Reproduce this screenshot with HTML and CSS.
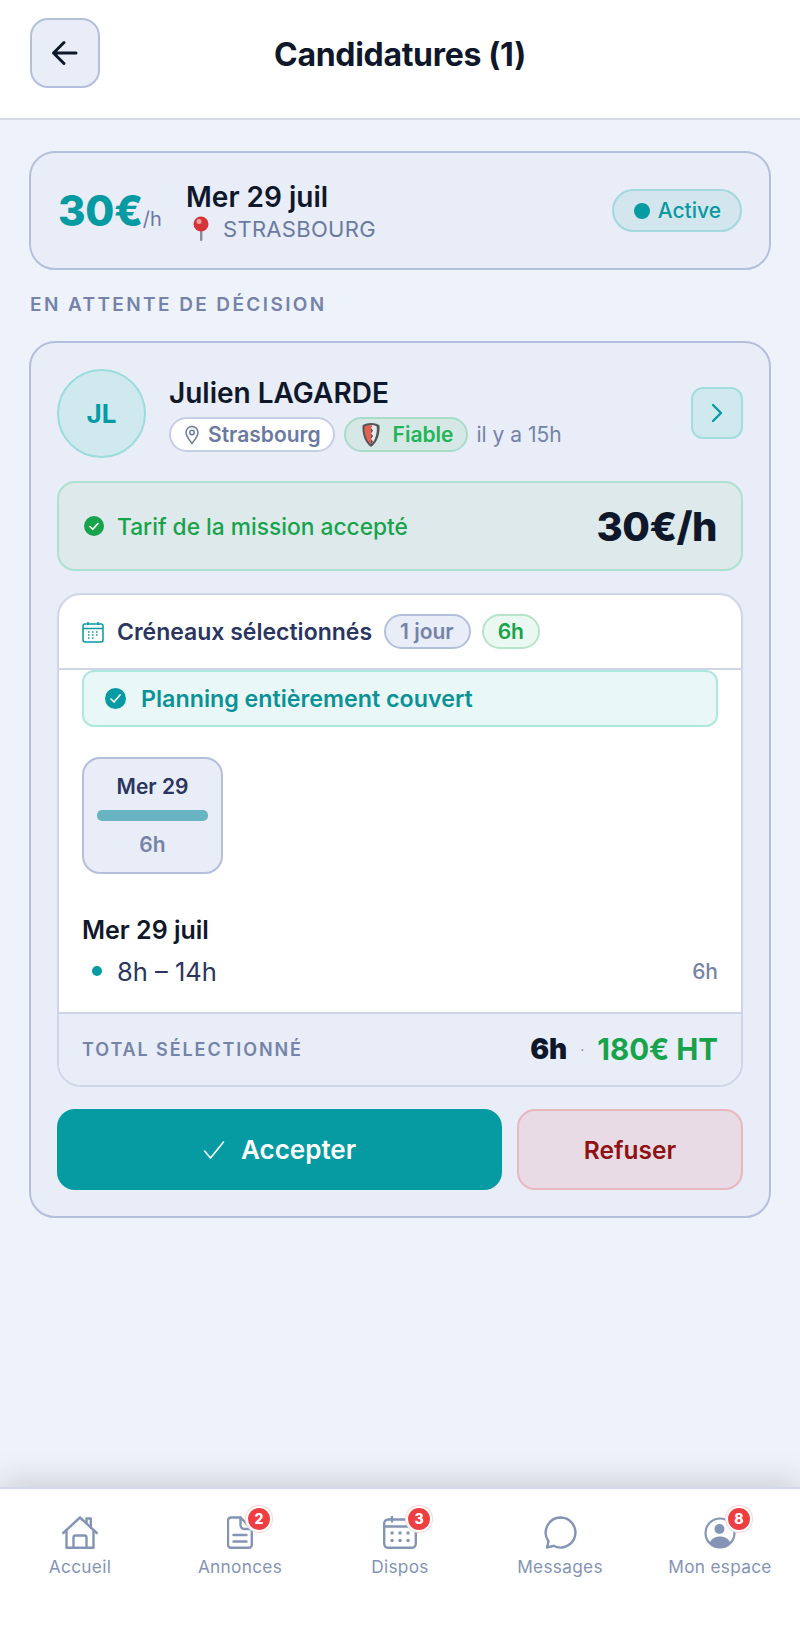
FILE: index.html
```html
<!DOCTYPE html>
<html lang="fr">
<head>
  <meta charset="UTF-8" />
  <meta name="viewport" content="width=device-width, initial-scale=1.0"/>
  <title>Candidatures</title>
  <link rel="stylesheet" href="styles.css">
</head>
<body>
<div class="app">

  <header class="topbar">
    <button class="back-btn" aria-label="Retour">
      <svg width="30" height="30" viewBox="0 0 30 30" fill="none" stroke="#0f172a" stroke-width="3" stroke-linecap="round" stroke-linejoin="round"><path d="M26 15H4M14 4.500 3.500 15 14 25.500"/></svg>
    </button>
    <h1>Candidatures (1)</h1>
  </header>

  <main class="content">
    <section class="mission">
      <div class="mission-price">30€<small>/h</small></div>
      <div class="mission-info">
        <div class="mission-date">Mer 29 juil</div>
        <div class="mission-place">
          <svg width="20" height="26" viewBox="0 0 20 26"><rect x="9" y="11" width="2.400" height="14" rx="1" fill="#8b8f94"/><circle cx="10" cy="8" r="7.500" fill="#d6323a"/><circle cx="8" cy="5.500" r="2.500" fill="#f3a0a0"/></svg>
          <span>STRASBOURG</span>
        </div>
      </div>
      <div class="status-pill"><i></i>Active</div>
    </section>

    <h2 class="section-label">EN ATTENTE DE DÉCISION</h2>

    <section class="candidate">
      <div class="cand-head">
        <div class="avatar">JL</div>
        <div class="cand-info">
          <div class="cand-name">Julien LAGARDE</div>
          <div class="cand-tags">
            <span class="tag tag-city">
              <svg width="16" height="20" viewBox="0 0 16 20" fill="none" stroke="#6b7aa1" stroke-width="1.500"><path d="M8 18.500C5 14.500 2 11 2 7.500a6 6 0 0 1 12 0C14 11 11 14.500 8 18.500Z"/><circle cx="8" cy="7.500" r="2.200"/></svg>
              Strasbourg
            </span>
            <span class="tag tag-ok">
              <svg width="20" height="26" viewBox="0 0 20 26"><path d="M10 1C6 1 3 2 1.500 3.500 1 11 3 20 10 25c7-5 9-14 8.500-21.500C17 2 14 1 10 1Z" fill="#55565a"/><path d="M10 3C7 3 4.500 3.700 3.500 4.700 3.200 11 5 18 10 22.500Z" fill="#e4604f"/><path d="M10 3c2.500 0 4.800.7 5.800 1.700.3 6.300-1 13.300-5.800 17.800l2-3-2-2.500 2-3-2-2.500 2-3-2-2.500 1-2Z" fill="#e8e8ea"/></svg>
              Fiable
            </span>
            <span class="cand-when">il y a 15h</span>
          </div>
        </div>
        <button class="next-btn" aria-label="Voir le profil">
          <svg width="16" height="22" viewBox="0 0 16 22" fill="none" stroke="#069aa2" stroke-width="2.400" stroke-linecap="round" stroke-linejoin="round"><path d="M4 3l8 8-8 8"/></svg>
        </button>
      </div>

      <div class="rate-ok">
        <div class="rate-text">
          <svg width="20" height="20" viewBox="0 0 20 20"><circle cx="10" cy="10" r="10" fill="#16a34a"/><path d="M6 10.500l2.800 2.800L14 7.500" fill="none" stroke="#fff" stroke-width="1.600" stroke-linecap="round" stroke-linejoin="round"/></svg>
          Tarif de la mission accepté
        </div>
        <div class="rate-value">30€/h</div>
      </div>

      <div class="slots">
        <div class="slots-head">
          <svg width="22" height="22" viewBox="0 0 22 22" fill="none" stroke="#069aa2" stroke-width="1.500"><rect x="1" y="3" width="20" height="18" rx="2"/><path d="M1 7.500h20M6 1v3M16 1v3"/><path d="M6 11h1.500M10 11h1.500M14 11h1.500M6 14h1.500M10 14h1.500M14 14h1.500M6 17h1.500M10 17h1.500" stroke-width="1.600"/></svg>
          <h3>Créneaux sélectionnés</h3>
          <span class="count count-days">1 jour</span>
          <span class="count count-hours">6h</span>
        </div>
        <div class="slots-body">
          <div class="covered">
            <svg width="21" height="21" viewBox="0 0 21 21"><circle cx="10.500" cy="10.500" r="10.500" fill="#069aa2"/><path d="M6 11l3 3 6-7" fill="none" stroke="#fff" stroke-width="1.700" stroke-linecap="round" stroke-linejoin="round"/></svg>
            Planning entièrement couvert
          </div>
          <div class="day-tile">
            <div class="day-name">Mer 29</div>
            <div class="day-bar"></div>
            <div class="day-hours">6h</div>
          </div>
          <div class="day-title">Mer 29 juil</div>
          <div class="slot-row">
            <i></i>
            <span class="slot-time">8h – 14h</span>
            <span class="slot-len">6h</span>
          </div>
        </div>
        <div class="slots-total">
          <span class="total-label">TOTAL SÉLECTIONNÉ</span>
          <span class="total-values"><b>6h</b><small>·</small><em>180€ HT</em></span>
        </div>
      </div>

      <div class="actions">
        <button class="btn-accept">
          <svg width="22" height="20" viewBox="0 0 22 20" fill="none" stroke="#fff" stroke-width="1.600" stroke-linecap="round" stroke-linejoin="round"><path d="M1.500 11l6 7L20.500 2"/></svg>
          Accepter
        </button>
        <button class="btn-refuse">Refuser</button>
      </div>
    </section>
  </main>

  <nav class="tabbar">
    <div class="tab">
      <span class="tab-icon">
        <svg width="36" height="33" viewBox="0 0 36 33" fill="none" stroke="#8494b5" stroke-width="2.400" stroke-linejoin="round" stroke-linecap="round"><path d="M1.200 17 18 1.500 34.800 17"/><path d="M24.500 7V2.500h4.300v9"/><path d="M4.500 14.500V31.800h27V14.500"/><path d="M11.500 31.800V21.500a2 2 0 0 1 2-2h9a2 2 0 0 1 2 2v10.300"/></svg>
      </span>
      Accueil
    </div>
    <div class="tab">
      <span class="tab-icon">
        <svg width="26" height="33" viewBox="0 0 26 33" fill="none" stroke="#8494b5" stroke-width="2.400" stroke-linejoin="round" stroke-linecap="round"><path d="M4 1.500h9.500L24.800 13v15.800a3 3 0 0 1-3 3H4a3 3 0 0 1-3-3V4.500a3 3 0 0 1 3-3Z"/><path d="M13.500 1.500V9a4 4 0 0 0 4 4h7.300M6.500 19h13M6.500 25.500h13"/></svg>
        <span class="badge">2</span>
      </span>
      Annonces
    </div>
    <div class="tab">
      <span class="tab-icon">
        <svg width="34" height="33" viewBox="0 0 34 33" fill="none" stroke="#8494b5" stroke-width="2.400" stroke-linecap="round"><rect x="1.200" y="3.500" width="31.600" height="28.300" rx="4"/><path d="M1.200 10.500h31.600M9 1v4.500M25 1v4.500"/><path d="M9 17h.100M17 17h.100M25 17h.100M9 24.500h.100M17 24.500h.100M25 24.500h.100" stroke-width="3.400"/></svg>
        <span class="badge badge-dispos">3</span>
      </span>
      Dispos
    </div>
    <div class="tab">
      <span class="tab-icon">
        <svg width="34" height="33" viewBox="0 0 34 33" fill="none" stroke="#8494b5" stroke-width="2.400" stroke-linejoin="round"><path d="M17.500 1.500a15 15 0 1 1-7 28.300l-6.500 1.700 1.500-6.300A15 15 0 0 1 17.500 1.500Z"/></svg>
      </span>
      Messages
    </div>
    <div class="tab">
      <span class="tab-icon">
        <svg width="32" height="32" viewBox="0 0 32 32"><circle cx="16" cy="16" r="14.500" fill="none" stroke="#8494b5" stroke-width="2.200"/><circle cx="15.500" cy="12" r="5" fill="#8494b5"/><path d="M5.500 26c2-4.500 6-6.500 10.500-6.500S24.500 21.500 26.500 26A14.500 14.500 0 0 1 16 30.500 14.500 14.500 0 0 1 5.500 26Z" fill="#8494b5"/></svg>
        <span class="badge badge-me">8</span>
      </span>
      Mon espace
    </div>
  </nav>

</div>
</body>
</html>
```

FILE: styles.css
```css
* {
  box-sizing: border-box;
}

body {
  margin: 0;
  font-family: Inter, 'Noto Sans', sans-serif;
  background-color: #eef2fb;
  color: #0f172a;
}

button {
  font-family: inherit;
  cursor: pointer;
}

svg {
  display: block;
  flex-shrink: 0;
}

.app {
  display: flex;
  flex-direction: column;
  height: 1650px;
  overflow: hidden;
}

/* Top bar */
.topbar {
  position: relative;
  display: flex;
  align-items: center;
  justify-content: center;
  height: 120px;
  padding: 0 30px 1px;
  background-color: white;
  border-bottom: 2px solid #d3d9e8;
}

.back-btn {
  position: absolute;
  left: 30px;
  top: 18px;
  display: flex;
  align-items: center;
  justify-content: center;
  width: 70px;
  height: 70px;
  padding: 0;
  background-color: #e8edf7;
  border: 2px solid #b4bfdc;
  border-radius: 18px;
}

.topbar h1 {
  margin: 0 0 8px;
  font-size: 32px;
  font-weight: 700;
  letter-spacing: -0.3px;
}

/* Main */
.content {
  flex: 1;
  padding: 31px 29px 0;
}

.mission {
  display: flex;
  align-items: center;
  height: 119px;
  padding: 0 27px;
  background-color: #e8edf7;
  border: 2px solid #b4bfdc;
  border-radius: 26px;
}

.mission-price {
  width: 128px;
  margin-bottom: 1px;
  font-size: 42px;
  font-weight: 800;
  letter-spacing: -0.3px;
  color: #069aa2;
}

.mission-price small {
  font-size: 20px;
  font-weight: 400;
  letter-spacing: 0;
  color: #6b7aa1;
}

.mission-date {
  font-size: 28px;
  font-weight: 600;
  line-height: 34px;
}

.mission-place {
  display: flex;
  align-items: center;
  gap: 12px;
  margin-top: 2px;
  padding-left: 5px;
  font-size: 22px;
  color: #6b7aa1;
}

.mission-place span {
  letter-spacing: 0.3px;
}

.status-pill {
  display: flex;
  align-items: center;
  gap: 8px;
  height: 43px;
  margin-left: auto;
  padding: 0 19px 0 20px;
  font-size: 21px;
  font-weight: 500;
  color: #069aa2;
  background-color: #d3e6ee;
  border: 2px solid #a3d8dc;
  border-radius: 22px;
}

.status-pill i {
  width: 16px;
  height: 16px;
  background-color: #069aa2;
  border-radius: 50%;
}

.section-label {
  margin: 24px 1px 25px;
  font-size: 19px;
  line-height: 22px;
  font-weight: 600;
  letter-spacing: 2.400px;
  color: #7583a8;
}

/* Candidate card */
.candidate {
  height: 877px;
  padding: 26px;
  background-color: #e8edf7;
  border: 2px solid #b4bfdc;
  border-radius: 26px;
}

.cand-head {
  display: flex;
  align-items: center;
  height: 88px;
}

.avatar {
  display: flex;
  align-items: center;
  justify-content: center;
  width: 89px;
  height: 89px;
  font-size: 26px;
  font-weight: 700;
  color: #069aa2;
  background-color: #d0e9ee;
  border: 2px solid #9bdcdc;
  border-radius: 50%;
}

.cand-info {
  margin: 2px 0 0 23px;
}

.cand-name {
  font-size: 28px;
  font-weight: 600;
  line-height: 34px;
}

.cand-tags {
  display: flex;
  align-items: center;
  gap: 9px;
  margin-top: 7px;
}

.tag {
  display: flex;
  align-items: center;
  height: 35px;
  font-size: 21px;
  font-weight: 600;
  border-radius: 18px;
  border: 2px solid;
}

.tag-city {
  gap: 8px;
  padding: 0 12px 0 13px;
  color: #6b7aa1;
  background-color: white;
  border-color: #c6cee5;
}

.tag-ok {
  gap: 12px;
  padding: 0 12px 0 15px;
  color: #22b455;
  background-color: #d6e8e6;
  border-color: #a8dcc8;
}

.cand-when {
  font-size: 21px;
  color: #7583a8;
}

.next-btn {
  display: flex;
  align-items: center;
  justify-content: center;
  width: 52px;
  height: 52px;
  margin-left: auto;
  padding: 0;
  background-color: #d0e9ee;
  border: 2px solid #a3dede;
  border-radius: 12px;
}

/* Rate */
.rate-ok {
  display: flex;
  align-items: center;
  justify-content: space-between;
  height: 90px;
  margin-top: 24px;
  padding: 0 24px 0 25px;
  background-color: #dde9ea;
  border: 2px solid #ade0d0;
  border-radius: 18px;
}

.rate-text {
  display: flex;
  align-items: center;
  gap: 13px;
  font-size: 22.750px;
  font-weight: 500;
  color: #16a34a;
}

.rate-value {
  font-size: 40px;
  font-weight: 800;
  letter-spacing: -0.5px;
}

/* Slots */
.slots {
  margin-top: 22px;
  background-color: white;
  border: 2px solid #ced5e8;
  border-radius: 24px;
  overflow: hidden;
}

.slots-head {
  display: flex;
  align-items: center;
  height: 75px;
  padding: 0 23px;
  border-bottom: 2px solid #ced5e8;
}

.slots-head h3 {
  margin: 0 12px 0 13px;
  font-size: 23px;
  font-weight: 600;
  color: #2a3560;
}

.count {
  display: flex;
  align-items: center;
  height: 35px;
  font-size: 21px;
  font-weight: 600;
  border-radius: 18px;
  border: 2px solid;
}

.count-days {
  padding: 0 15px 0 14px;
  margin-right: 11px;
  color: #7583a8;
  background-color: #e8edf7;
  border-color: #b4bfdc;
}

.count-hours {
  padding: 0 14px;
  color: #16a34a;
  background-color: #eaf8f1;
  border-color: #b5e5c9;
}

.slots-body {
  padding: 0 23px;
}

.covered {
  display: flex;
  align-items: center;
  gap: 15px;
  height: 57px;
  padding: 0 21px;
  font-size: 23.250px;
  font-weight: 600;
  color: #0b9298;
  background-color: #e9f8f6;
  border: 2px solid #ade8de;
  border-radius: 12px;
}

.day-tile {
  display: flex;
  flex-direction: column;
  align-items: center;
  width: 141px;
  height: 117px;
  margin-top: 30px;
  padding: 0 13px;
  background-color: #e8edf7;
  border: 2px solid #b4bfdc;
  border-radius: 18px;
}

.day-name {
  margin-top: 15px;
  font-size: 21px;
  font-weight: 600;
  line-height: 26px;
  color: #2a3560;
}

.day-bar {
  width: 100%;
  height: 11px;
  margin-top: 10px;
  background-color: #69b4c3;
  border-radius: 5px;
}

.day-hours {
  margin-top: 11px;
  font-size: 21px;
  font-weight: 600;
  line-height: 26px;
  color: #7583a8;
}

.day-title {
  margin-top: 41px;
  font-size: 25px;
  font-weight: 600;
  line-height: 30px;
}

.slot-row {
  display: flex;
  align-items: center;
  height: 40px;
  margin-top: 6px;
  padding-left: 10px;
}

.slot-row i {
  width: 10px;
  height: 10px;
  background-color: #069aa2;
  border-radius: 50%;
}

.slot-time {
  margin-left: 15px;
  font-size: 25.500px;
  color: #2a3560;
}

.slot-len {
  margin-left: auto;
  font-size: 21px;
  font-weight: 500;
  color: #7583a8;
}

.slots-total {
  display: flex;
  align-items: center;
  justify-content: space-between;
  height: 73px;
  margin-top: 21px;
  padding: 0 23px 1px;
  background-color: #e8edf7;
  border-top: 2px solid #ced5e8;
}

.total-label {
  font-size: 18px;
  font-weight: 600;
  letter-spacing: 1.900px;
  color: #7583a8;
}

.total-values {
  display: flex;
  align-items: center;
  font-size: 29.500px;
  font-weight: 700;
}

.total-values b {
  font-size: 28px;
}

.total-values small {
  margin: 0 13px;
  font-size: 14px;
  font-weight: 400;
  color: #7583a8;
}

.total-values em {
  font-style: normal;
  color: #16a34a;
}

/* Buttons */
.actions {
  display: flex;
  gap: 15px;
  margin-top: 22px;
}

.btn-accept {
  display: flex;
  align-items: center;
  justify-content: center;
  gap: 16px;
  width: 445px;
  height: 81px;
  font-size: 26px;
  font-weight: 600;
  color: white;
  background-color: #069aa2;
  border: none;
  border-radius: 18px;
}

.btn-refuse {
  flex: 1;
  height: 81px;
  font-size: 24.500px;
  font-weight: 600;
  color: #8f1212;
  background-color: #e8dbe5;
  border: 2px solid #e8b8bf;
  border-radius: 18px;
}

/* Tab bar */
.tabbar {
  display: grid;
  grid-template-columns: repeat(5, 1fr);
  height: 163px;
  padding-top: 27px;
  background-color: white;
  border-top: 2px solid #d3d9e8;
  box-shadow: 0 -6px 30px rgba(0, 0, 0, 0.15);
}

.tab {
  display: flex;
  flex-direction: column;
  align-items: center;
  font-size: 17.250px;
  line-height: 22px;
  letter-spacing: 0.3px;
  color: #8494b5;
}

.tab-icon {
  position: relative;
  display: flex;
  align-items: center;
  justify-content: center;
  height: 33px;
  margin-bottom: 7px;
}

.badge {
  position: absolute;
  top: -8px;
  right: -17px;
  display: flex;
  align-items: center;
  justify-content: center;
  width: 22px;
  height: 22px;
  font-size: 14px;
  font-weight: 800;
  letter-spacing: 0;
  color: white;
  background-color: #ef3e42;
  box-shadow: 0 0 0 2px white, 0 0 0 3px #f8d5d8;
  border-radius: 50%;
}

.badge-dispos {
  right: -13px;
}

.badge-me {
  right: -14px;
}
```
